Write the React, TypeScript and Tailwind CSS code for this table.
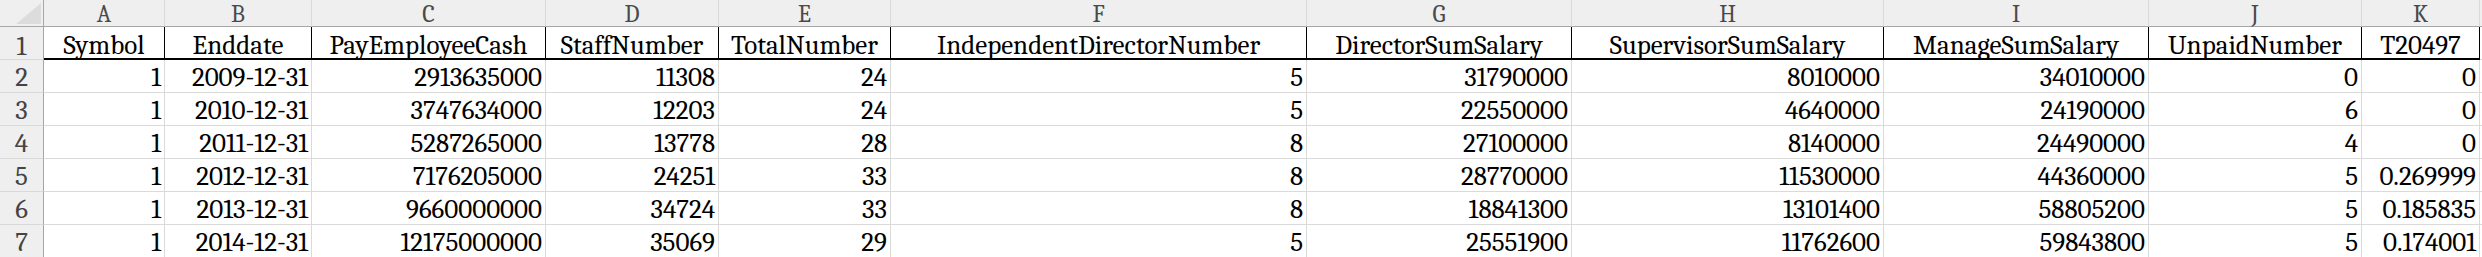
import React from "react";

const grid =
  "grid grid-cols-[44px_121px_147px_234px_173px_172px_416px_265px_312px_265px_213px_118px_1fr]";

const letters = ["A", "B", "C", "D", "E", "F", "G", "H", "I", "J", "K"];
const headers = [
  "Symbol",
  "Enddate",
  "PayEmployeeCash",
  "StaffNumber",
  "TotalNumber",
  "IndependentDirectorNumber",
  "DirectorSumSalary",
  "SupervisorSumSalary",
  "ManageSumSalary",
  "UnpaidNumber",
  "T20497",
];

const rows: string[][] = [
  ["1", "2009-12-31", "2913635000", "11308", "24", "5", "31790000", "8010000", "34010000", "0", "0"],
  ["1", "2010-12-31", "3747634000", "12203", "24", "5", "22550000", "4640000", "24190000", "6", "0"],
  ["1", "2011-12-31", "5287265000", "13778", "28", "8", "27100000", "8140000", "24490000", "4", "0"],
  ["1", "2012-12-31", "7176205000", "24251", "33", "8", "28770000", "11530000", "44360000", "5", "0.269999"],
  ["1", "2013-12-31", "9660000000", "34724", "33", "8", "18841300", "13101400", "58805200", "5", "0.185835"],
  ["1", "2014-12-31", "12175000000", "35069", "29", "5", "25551900", "11762600", "59843800", "5", "0.174001"],
];

export default function App() {
  return (
    <div className="w-[2482px] h-[257px] overflow-hidden bg-white font-serif text-black">
      {/* column letters */}
      <div className={`${grid} h-[27px]`}>
        <div className="relative bg-[#efefef] border-r border-b border-[#a6a6a6]">
          <svg className="absolute left-[16px] top-[3px]" width="25" height="21" viewBox="0 0 25 21">
            <polygon points="25,0 25,21 0,21" fill="#dcdcdc" />
          </svg>
        </div>
        {letters.map((l) => (
          <div
            key={l}
            className="flex items-end justify-center bg-[#efefef] border-b border-b-[#a6a6a6] border-r border-r-[#d9d9d9] text-[24px] leading-[24px] text-[#4a4a4a]"
          >
            {l}
          </div>
        ))}
        <div className="bg-[#efefef] border-b border-b-[#a6a6a6]" />
      </div>

      {/* header row 1 */}
      <div className={`${grid} h-[33px]`}>
        <div className="flex items-end justify-center bg-[#efefef] border-r border-r-[#a6a6a6] border-b border-b-[#d9d9d9] text-[27px] leading-[24px] text-[#444]">
          1
        </div>
        {headers.map((h) => (
          <div
            key={h}
            className="flex items-end justify-center border-r border-r-black border-b-2 border-b-black text-[27px] leading-[24px] whitespace-nowrap"
          >
            {h}
          </div>
        ))}
        <div className="border-b border-b-[#dadada]" />
      </div>

      {/* data rows */}
      {rows.map((r, i) => (
        <div key={i} className={`${grid} h-[33px]`}>
          <div className="flex items-end justify-center pb-[2px] bg-[#efefef] border-r border-r-[#a6a6a6] border-b border-b-[#d9d9d9] text-[27px] leading-[24px] text-[#444]">
            {i + 2}
          </div>
          {r.map((v, j) => (
            <div
              key={j}
              className="flex items-end justify-end pb-[2px] pr-[3px] border-r border-r-[#dadada] border-b border-b-[#dadada] text-[27px] leading-[24px] whitespace-nowrap"
            >
              {v}
            </div>
          ))}
          <div className="border-b border-b-[#dadada]" />
        </div>
      ))}
    </div>
  );
}
